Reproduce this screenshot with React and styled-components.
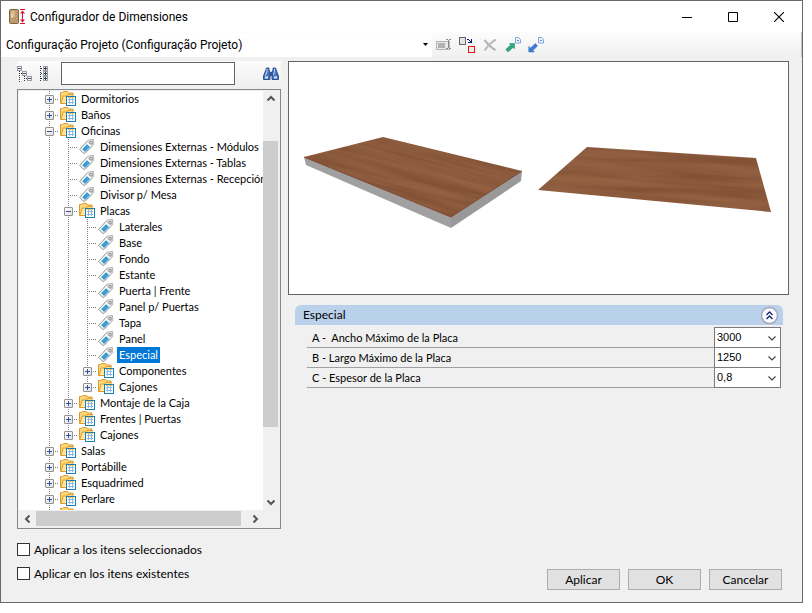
import React, { useState } from "react";
import styled, { createGlobalStyle, css } from "styled-components";

const GlobalStyle = createGlobalStyle`
  *, *::before, *::after { box-sizing: border-box; }
  body { margin: 0; background: #ffffff; }
  button, input, select { font: inherit; color: inherit; }
`;

const uiFont = `Roboto, "Open Sans", sans-serif`;
const smallFont = `Lato, "Liberation Sans", sans-serif`;
const valueFont = `"Liberation Sans", Arial, sans-serif`;

const Page = styled.div`
  display: flex;
  min-height: 100vh;
  padding: 0 9px 10px 0;
`;

const Window = styled.main`
  flex: 1;
  min-width: 0;
  display: flex;
  flex-direction: column;
  border: 1px solid #696969;
  background: #f0f0f0;
  color: #000000;
  font: 11px/16px ${smallFont};
`;

const TitleBar = styled.header`
  display: flex;
  align-items: center;
  height: 31px;
  padding-left: 8px;
  background: #ffffff;
`;

const Title = styled.h1`
  flex: 1;
  margin: 0 0 0 4px;
  font: 12px/16px ${uiFont};
`;

const IconButton = styled.button`
  display: flex;
  align-items: center;
  justify-content: center;
  width: ${(p) => p.$width || 23}px;
  height: ${(p) => p.$height || 24}px;
  padding: 0;
  border: 0;
  background: transparent;
`;

const Toolbar = styled.div`
  display: flex;
  align-items: center;
  height: 25px;
  border-right: 1px solid #c4c4c4;
  background: linear-gradient(#fdfdfd, #f0f0f0);
`;

const ProjectPicker = styled.div`
  display: grid;
  align-items: center;
  flex: 0 1 431px;
  height: 24px;
  background: #ffffff;
  > * { grid-area: 1 / 1; }
  > svg { justify-self: end; margin-right: 4px; pointer-events: none; }
`;

const ProjectSelect = styled.select`
  appearance: none;
  width: 100%;
  height: 24px;
  padding: 0 16px 0 5px;
  border: 0;
  background: transparent;
  font: 12px/16px ${uiFont};
`;

const Body = styled.div`
  flex: 1;
  min-height: 0;
  display: flex;
  gap: 7px;
  padding: 4px 13px 0 16px;
`;

const Sidebar = styled.section`
  flex: 0 0 264px;
  min-width: 0;
  display: flex;
  flex-direction: column;
  gap: 3px;
`;

const SearchBar = styled.div`
  display: flex;
  align-items: center;
  height: 25px;
  background: linear-gradient(#fcfcfc, #f0f0f0);
`;

const SearchInput = styled.input`
  flex: 1;
  min-width: 0;
  height: 23px;
  margin: 0 26px 0 6px;
  padding: 0 4px;
  border: 1px solid #646464;
  background: #ffffff;
`;

const TreeBox = styled.div`
  flex: 1 1 440px;
  display: grid;
  grid-template: minmax(0, 1fr) 17px / minmax(0, 1fr) 16px;
  min-height: 0;
  padding: 1px;
  border: 1px solid #828790;
  background: #f0f0f0;
`;

const TreeList = styled.ul`
  height: 0;
  min-height: 100%;
  margin: 0;
  padding: 0 0 0 21px;
  overflow: hidden;
  list-style: none;
  background: #ffffff;
`;

const TreeRow = styled.li`
  display: flex;
  align-items: flex-start;
  height: 16px;
  white-space: nowrap;
  > svg { flex: none; margin: 0 3px 0 1px; }
`;

const dotsDown = "repeating-linear-gradient(#808080 0 1px, transparent 1px 2px)";
const dotsAcross = "repeating-linear-gradient(90deg, #808080 0 1px, transparent 1px 2px)";

const Guide = styled.span`
  flex: none;
  display: flex;
  align-items: center;
  justify-content: center;
  width: 19px;
  height: 16px;
  background: ${dotsDown} 9px 0 / 1px ${(p) => (p.$end ? "8px" : "16px")} no-repeat
    ${(p) => p.$tee && css`, ${dotsAcross} 9px 8px / 10px 1px no-repeat`};
`;

const Expander = styled.button`
  display: flex;
  width: 9px;
  height: 9px;
  margin-top: 1px;
  padding: 0;
  border: 1px solid #919191;
  border-radius: 1px;
  background: linear-gradient(135deg, #ffffff, #dedede);
`;

const TreeLabel = styled.span`
  height: 16px;
  padding: 0 2px;
  line-height: 16px;
  color: ${(p) => (p.$selected ? "#ffffff" : "#000000")};
  background: ${(p) => (p.$selected ? "#0078d7" : "transparent")};
`;

const ScrollBar = styled.div`
  display: flex;
  flex-direction: ${(p) => (p.$vertical ? "column" : "row")};
  min-height: 0;
  background: #f0f0f0;
`;

const ScrollSpace = styled.span`
  flex: ${(p) => p.$share} 1 0;
`;

const ScrollThumb = styled.span`
  flex: ${(p) => p.$share} 1 0;
  margin: ${(p) => (p.$vertical ? "0 1px 0 0" : "1px 0")};
  background: #cdcdcd;
`;

const Details = styled.section`
  flex: 1;
  min-width: 0;
  display: flex;
  flex-direction: column;
  gap: 10px;
`;

const Preview = styled.figure`
  margin: 0;
  border: 1px solid #646464;
  background: #ffffff;
  > svg { display: block; width: 100%; height: auto; }
`;

const Group = styled.section`
  margin: 0 6px 0 7px;
`;

const GroupHeader = styled.div`
  display: flex;
  align-items: center;
  justify-content: space-between;
  height: 20px;
  padding: 0 4px 0 8px;
  border-radius: 6px 6px 0 0;
  background: #b9d1ea;
`;

const GroupTitle = styled.h2`
  margin: 0;
  font: 12px/16px ${smallFont};
`;

const FieldList = styled.div`
  padding: 3px 2px 0 12px;
`;

const FieldRow = styled.div`
  display: flex;
  height: 20px;
`;

const FieldLabel = styled.label`
  flex: 1;
  padding: 2px 0 0 5px;
  border-bottom: 1px solid #a0a0a0;
  white-space: pre;
`;

const FieldPicker = styled.div`
  display: grid;
  align-items: center;
  width: 67px;
  height: 21px;
  margin-top: -1px;
  border: 1px solid #7a7a7a;
  background: #ffffff;
  > * { grid-area: 1 / 1; }
  > svg { justify-self: end; margin-right: 3px; pointer-events: none; }
`;

const FieldSelect = styled.select`
  appearance: none;
  width: 100%;
  height: 19px;
  padding: 0 16px 1px 2px;
  border: 0;
  background: transparent;
  font: 11px/16px ${valueFont};
`;

const Footer = styled.footer`
  display: flex;
  align-items: flex-end;
  justify-content: space-between;
  min-height: 73px;
  padding: 14px 20px 12px 16px;
`;

const CheckList = styled.div`
  display: flex;
  flex-direction: column;
  align-self: flex-start;
  gap: 11px;
`;

const CheckLabel = styled.label`
  display: flex;
  align-items: center;
  gap: 4px;
  height: 13px;
  font-size: 12px;
`;

const CheckBox = styled.input`
  appearance: none;
  width: 13px;
  height: 13px;
  margin: 0;
  border: 1px solid #333333;
  background: #ffffff;
  &:checked { box-shadow: inset 0 0 0 2px #ffffff; background: #333333; }
`;

const Actions = styled.div`
  display: flex;
  gap: 8px;
`;

const ActionButton = styled.button`
  width: 73px;
  height: 21px;
  padding: 0;
  border: 1px solid #adadad;
  background: #e1e1e1;
  font: 12px/16px ${smallFont};
`;

function AppIcon() {
  return (
    <svg width="17" height="16" viewBox="0 0 17 16">
      <rect x="0.5" y="0.5" width="9" height="14" rx="1" fill="#c09a6c" stroke="#7c6448" />
      <path d="M2 2h4v6h-4z" fill="#d9b98e" />
      <path d="M3 5v4" stroke="#f8ecd8" />
      <path d="M11 .5h5M11 14.5h5M13.500 2v11" stroke="#d8102c" />
      <path d="M11 4.500l2.500-3 2.500 3zM11 10.500l2.500 3 2.500-3z" fill="#d8102c" />
    </svg>
  );
}

function FolderIcon() {
  return (
    <svg width="16" height="16" viewBox="0 0 16 16">
      <path d="M.5 12.500V1.500h2l1-1h4l1 1.500h4.500v10.500z" fill="#fbd779" stroke="#dd9a2e" />
      <path d="M1 12.500l2-7.500h4l1-1.500h5.500" fill="none" stroke="#e0a33c" />
      <path d="M2 12l1.800-6h4l1-1.500h4V12z" fill="#ffe9a3" />
      <rect x="6.500" y="5.500" width="9" height="9" fill="#fff" stroke="#1480b8" />
      <path d="M8 8.500h6M8 11.500h6M9.500 7v6M12.500 7v6" stroke="#8fb7e4" />
      <path d="M8 6.500h6" stroke="#f3c34e" />
    </svg>
  );
}

function TagIcon() {
  return (
    <svg width="16" height="16" viewBox="0 0 16 16">
      <path d="M.7 10.300L9 1.300l5.500-.6.200 4.800L6 14.400 4.200 14z" fill="#fafafa" stroke="#909090" strokeLinejoin="round" />
      <path d="M9 1.300l5.500-.6.200 4.800-1.700 1.800-5-4.700z" fill="#d5d5d5" />
      <path d="M3.200 10.200l4.800-5 3 2.800-4.800 5z" fill="#2794d2" />
      <path d="M5 10.500l4-4M6.500 11.500l3-3" stroke="#87c8ec" strokeDasharray="1 1" />
      <circle cx="12" cy="3.800" r="1.300" fill="#fff" stroke="#777" strokeWidth=".9" />
    </svg>
  );
}

function ExpandMark({ open }) {
  return (
    <svg width="7" height="7" viewBox="0 0 7 7">
      <path d={open ? "M1 3.500h5" : "M1 3.500h5M3.500 1v5"} stroke="#3450a0" />
    </svg>
  );
}

function CollapseTreeIcon() {
  return (
    <svg width="16" height="16" viewBox="0 0 16 16" fill="#f4f4f4" shapeRendering="crispEdges">
      <path d="M2.500 5v11M4 7.500h2M7.500 10v6M9 12.500h2" stroke="#333" strokeDasharray="1 1" fill="none" />
      <path d="M.5.5h4v4h-4zM5.500 5.500h4v4h-4zM10.500 10.500h4v4h-4z" stroke="#979ba5" />
      <path d="M1 2.500h3M6 7.500h3M11 12.500h3" stroke="#4a5263" />
    </svg>
  );
}

function ExpandTreeIcon() {
  return (
    <svg width="10" height="16" viewBox="0 0 10 16" fill="#f4f4f4" shapeRendering="crispEdges">
      <path d="M1.500 0v16M2 2.500h3M2 7.500h3M2 12.500h3" stroke="#333" strokeDasharray="1 1" fill="none" />
      <path d="M4.500.5h4v4h-4zM4.500 5.500h4v4h-4zM4.500 10.500h4v4h-4z" stroke="#979ba5" />
      <path d="M5 2.500h3M5 7.500h3M5 12.500h3M6.500 1v3M6.500 6v3M6.500 11v3" stroke="#333c50" />
    </svg>
  );
}

function BinocularsIcon() {
  return (
    <svg width="16" height="14" viewBox="0 0 16 14">
      <path d="M3.500 1h2.500v2l1 2v7.500H.5V9L2.500 4zM12.500 1H10v2L9 5v7.500h6.500V9l-2-5z" fill="#4a76bd" stroke="#24478a" strokeWidth=".9" />
      <path d="M6 5h4v4H6z" fill="#33589b" />
      <path d="M4 2v2.500L2.500 8.500M11.500 2v2.500L10.500 8" stroke="#c4daf7" fill="none" />
      <path d="M2 9.500h3v2H2zM11 9.500h3v2h-3z" fill="#d7e6fa" />
    </svg>
  );
}

function RenameIcon() {
  return (
    <svg width="16" height="14" viewBox="0 0 16 14" shapeRendering="crispEdges">
      <path d="M.5 3.500h13v8H.5z" fill="#e8e8e8" stroke="#b4b4b4" />
      <path d="M2 5h7v5H2z" fill="#b2b2b2" />
      <path d="M10 1.500h2M13 1.500h2M12.500 2v8M10 10.500h2M13 10.500h2" stroke="#8b8b8b" />
    </svg>
  );
}

function ReplaceIcon() {
  return (
    <svg width="16" height="16" viewBox="0 0 16 16" shapeRendering="crispEdges">
      <path d="M.5.500h6v7h-6z" fill="#e4e4e4" stroke="#72606a" />
      <path d="M9.500 9.500h6v6h-6z" fill="#e8ecec" stroke="#ee1111" />
      <path d="M8 2h2v1h1v1h1V2h1v4H9V5h2V4h-1V3H8z" fill="#101a75" />
    </svg>
  );
}

function DeleteIcon() {
  return (
    <svg width="14" height="12" viewBox="0 0 14 12">
      <path d="M1.500 1C5 5 8 9 12.500 11" stroke="#b2b2b2" strokeWidth="2" fill="none" />
      <path d="M13 .5C8 3 4 8 1.500 11.500" stroke="#bcbcbc" strokeWidth="2" fill="none" />
    </svg>
  );
}

function TransferIcon({ color, edge, down }) {
  return (
    <svg width="16" height="16" viewBox="0 0 16 16">
      <path
        d={down ? "M.8 9.500v5.500h5.500L4.800 13.500 9.500 9 7.500 6.500 2.500 11z" : "M.8 12.500L5.500 8 4.500 6.500H9.500v5L8 10.500 3 15z"}
        fill={color}
        stroke={edge}
        strokeWidth=".5"
      />
      <path d="M10.500.5h3l2 2v3.500h-5z" fill="#e6effc" stroke="#83a6df" />
      <path d="M12 3.500h2" stroke="#6b91d1" />
    </svg>
  );
}

function CollapseGroupIcon() {
  return (
    <svg width="19" height="19" viewBox="0 0 19 19">
      <circle cx="9.500" cy="9.500" r="8" fill="#fafbfe" stroke="#a3a6b8" strokeWidth="1.500" />
      <path d="M6.500 9l3-3 3 3M6.500 13l3-3 3 3" fill="none" stroke="#17276e" strokeWidth="1.400" />
    </svg>
  );
}

const arrowPaths = {
  up: "M1.500 6.500L5 3l3.500 3.500",
  down: "M1.500 3.500L5 7l3.500-3.500",
  left: "M6.500 1.500L3 5l3.500 3.500",
  right: "M3.500 1.500L7 5 3.500 8.500",
};

function Chevron({ dir, width = 2, color = "#555" }) {
  return (
    <svg width="10" height="10" viewBox="0 0 10 10">
      <path d={arrowPaths[dir]} fill="none" stroke={color} strokeWidth={width} />
    </svg>
  );
}

function BoardsDrawing() {
  return (
    <svg viewBox="0 0 499 232" role="img" aria-label="Placa">
      <defs>
        <filter id="grain" x="0" y="0" width="100%" height="100%">
          <feTurbulence type="fractalNoise" baseFrequency="0.008 0.16" numOctaves="3" seed="8" />
          <feColorMatrix values=".2 0 0 0 .4  .18 0 0 0 .22  .14 0 0 0 .135  0 0 0 0 1" colorInterpolationFilters="sRGB" />
        </filter>
        <clipPath id="board-top">
          <path d="M15 95L94 75 233 109 162 155z" />
        </clipPath>
        <clipPath id="board-flat">
          <path d="M298 85L467 96 482 150 249 128z" />
        </clipPath>
      </defs>
      <path d="M15 95L162 155v11L17 103z" fill="#a0a0a0" />
      <path d="M162 155L233 109l-1 10-70 47z" fill="#999999" />
      <g clipPath="url(#board-top)">
        <rect x="0" y="-20" width="280" height="180" filter="url(#grain)" transform="rotate(15)" />
      </g>
      <path d="M15 95L162 155 233 109" fill="none" stroke="#7d4630" />
      <g clipPath="url(#board-flat)">
        <rect x="240" y="40" width="260" height="130" filter="url(#grain)" transform="rotate(4)" />
      </g>
    </svg>
  );
}

const nodes = [
  { level: 0, text: "Dormitorios", folder: true },
  { level: 0, text: "Baños", folder: true },
  { level: 0, text: "Oficinas", folder: true, open: true },
  { level: 1, text: "Dimensiones Externas - Módulos" },
  { level: 1, text: "Dimensiones Externas - Tablas" },
  { level: 1, text: "Dimensiones Externas - Recepción" },
  { level: 1, text: "Divisor p/ Mesa" },
  { level: 1, text: "Placas", folder: true, open: true },
  { level: 2, text: "Laterales" },
  { level: 2, text: "Base" },
  { level: 2, text: "Fondo" },
  { level: 2, text: "Estante" },
  { level: 2, text: "Puerta | Frente" },
  { level: 2, text: "Panel p/ Puertas" },
  { level: 2, text: "Tapa" },
  { level: 2, text: "Panel" },
  { level: 2, text: "Especial" },
  { level: 2, text: "Componentes", folder: true },
  { level: 2, text: "Cajones", folder: true, end: true },
  { level: 1, text: "Montaje de la Caja", folder: true },
  { level: 1, text: "Frentes | Puertas", folder: true },
  { level: 1, text: "Cajones", folder: true, end: true },
  { level: 0, text: "Salas", folder: true },
  { level: 0, text: "Portábille", folder: true },
  { level: 0, text: "Esquadrimed", folder: true },
  { level: 0, text: "Perlare", folder: true },
  { level: 0, text: "", folder: true },
];

const fields = [
  { id: "ancho", label: "A -  Ancho Máximo de la Placa", value: "3000" },
  { id: "largo", label: "B - Largo Máximo de la Placa", value: "1250" },
  { id: "espesor", label: "C - Espesor de la Placa", value: "0,8" },
];

function TreeNode({ node, selected, onSelect }) {
  return (
    <TreeRow role="treeitem" aria-level={node.level + 1} aria-selected={selected} onClick={onSelect}>
      {Array.from({ length: node.level }, (_, i) => (
        <Guide key={i} />
      ))}
      <Guide $tee $end={node.end}>
        {node.folder && (
          <Expander type="button" aria-label={node.open ? "Contraer" : "Expandir"}>
            <ExpandMark open={node.open} />
          </Expander>
        )}
      </Guide>
      {node.folder ? <FolderIcon /> : <TagIcon />}
      {node.text && <TreeLabel $selected={selected}>{node.text}</TreeLabel>}
    </TreeRow>
  );
}

export default function App() {
  const [selected, setSelected] = useState(16);

  return (
    <>
      <GlobalStyle />
      <Page>
        <Window>
          <TitleBar>
            <AppIcon />
            <Title>Configurador de Dimensiones</Title>
            <IconButton type="button" aria-label="Minimizar" $width={46} $height={31}>
              <svg width="10" height="10"><path d="M0 5.500h10" stroke="#000" /></svg>
            </IconButton>
            <IconButton type="button" aria-label="Maximizar" $width={46} $height={31}>
              <svg width="10" height="10"><path d="M.5.500h9v9h-9z" fill="none" stroke="#000" /></svg>
            </IconButton>
            <IconButton type="button" aria-label="Cerrar" $width={46} $height={31}>
              <svg width="10" height="10"><path d="M0 0l10 10M10 0L0 10" stroke="#000" strokeWidth="1.100" /></svg>
            </IconButton>
          </TitleBar>

          <Toolbar>
            <ProjectPicker>
              <ProjectSelect aria-label="Configuração">
                <option>Configuração Projeto (Configuração Projeto)</option>
              </ProjectSelect>
              <svg width="5" height="3"><path d="M0 0h5L2.500 3z" fill="#000" /></svg>
            </ProjectPicker>
            <IconButton type="button" aria-label="Renombrar"><RenameIcon /></IconButton>
            <IconButton type="button" aria-label="Sustituir"><ReplaceIcon /></IconButton>
            <IconButton type="button" aria-label="Eliminar"><DeleteIcon /></IconButton>
            <IconButton type="button" aria-label="Exportar"><TransferIcon color="#2fa87c" edge="#218763" /></IconButton>
            <IconButton type="button" aria-label="Importar"><TransferIcon down color="#3b7fd4" edge="#2966b8" /></IconButton>
          </Toolbar>

          <Body>
            <Sidebar>
              <SearchBar>
                <IconButton type="button" aria-label="Contraer todo" $width={16}><CollapseTreeIcon /></IconButton>
                <IconButton type="button" aria-label="Expandir todo" $width={22}><ExpandTreeIcon /></IconButton>
                <SearchInput type="text" aria-label="Buscar" />
                <IconButton type="button" aria-label="Buscar" $width={20}><BinocularsIcon /></IconButton>
              </SearchBar>
              <TreeBox>
                <TreeList role="tree">
                  {nodes.map((node, i) => (
                    <TreeNode key={i} node={node} selected={i === selected} onSelect={() => setSelected(i)} />
                  ))}
                </TreeList>
                <ScrollBar $vertical>
                  <IconButton type="button" aria-label="Subir" $width={15} $height={16}><Chevron dir="up" /></IconButton>
                  <ScrollSpace $share={34} />
                  <ScrollThumb $vertical $share={286} />
                  <ScrollSpace $share={67} />
                  <IconButton type="button" aria-label="Bajar" $width={15} $height={16}><Chevron dir="down" /></IconButton>
                </ScrollBar>
                <ScrollBar>
                  <IconButton type="button" aria-label="Izquierda" $width={17} $height={17}><Chevron dir="left" /></IconButton>
                  <ScrollThumb $share={205} />
                  <ScrollSpace $share={5} />
                  <IconButton type="button" aria-label="Derecha" $width={17} $height={17}><Chevron dir="right" /></IconButton>
                </ScrollBar>
              </TreeBox>
            </Sidebar>

            <Details>
              <Preview>
                <BoardsDrawing />
              </Preview>
              <Group>
                <GroupHeader>
                  <GroupTitle>Especial</GroupTitle>
                  <IconButton type="button" aria-label="Contraer grupo" $width={19} $height={19}>
                    <CollapseGroupIcon />
                  </IconButton>
                </GroupHeader>
                <FieldList>
                  {fields.map((field) => (
                    <FieldRow key={field.id}>
                      <FieldLabel htmlFor={field.id}>{field.label}</FieldLabel>
                      <FieldPicker>
                        <FieldSelect id={field.id}>
                          <option>{field.value}</option>
                        </FieldSelect>
                        <Chevron dir="down" width={1.2} color="#444" />
                      </FieldPicker>
                    </FieldRow>
                  ))}
                </FieldList>
              </Group>
            </Details>
          </Body>

          <Footer>
            <CheckList>
              <CheckLabel><CheckBox type="checkbox" />Aplicar a los itens seleccionados</CheckLabel>
              <CheckLabel><CheckBox type="checkbox" />Aplicar en los itens existentes</CheckLabel>
            </CheckList>
            <Actions>
              <ActionButton type="button">Aplicar</ActionButton>
              <ActionButton type="button">OK</ActionButton>
              <ActionButton type="button">Cancelar</ActionButton>
            </Actions>
          </Footer>
        </Window>
      </Page>
    </>
  );
}
